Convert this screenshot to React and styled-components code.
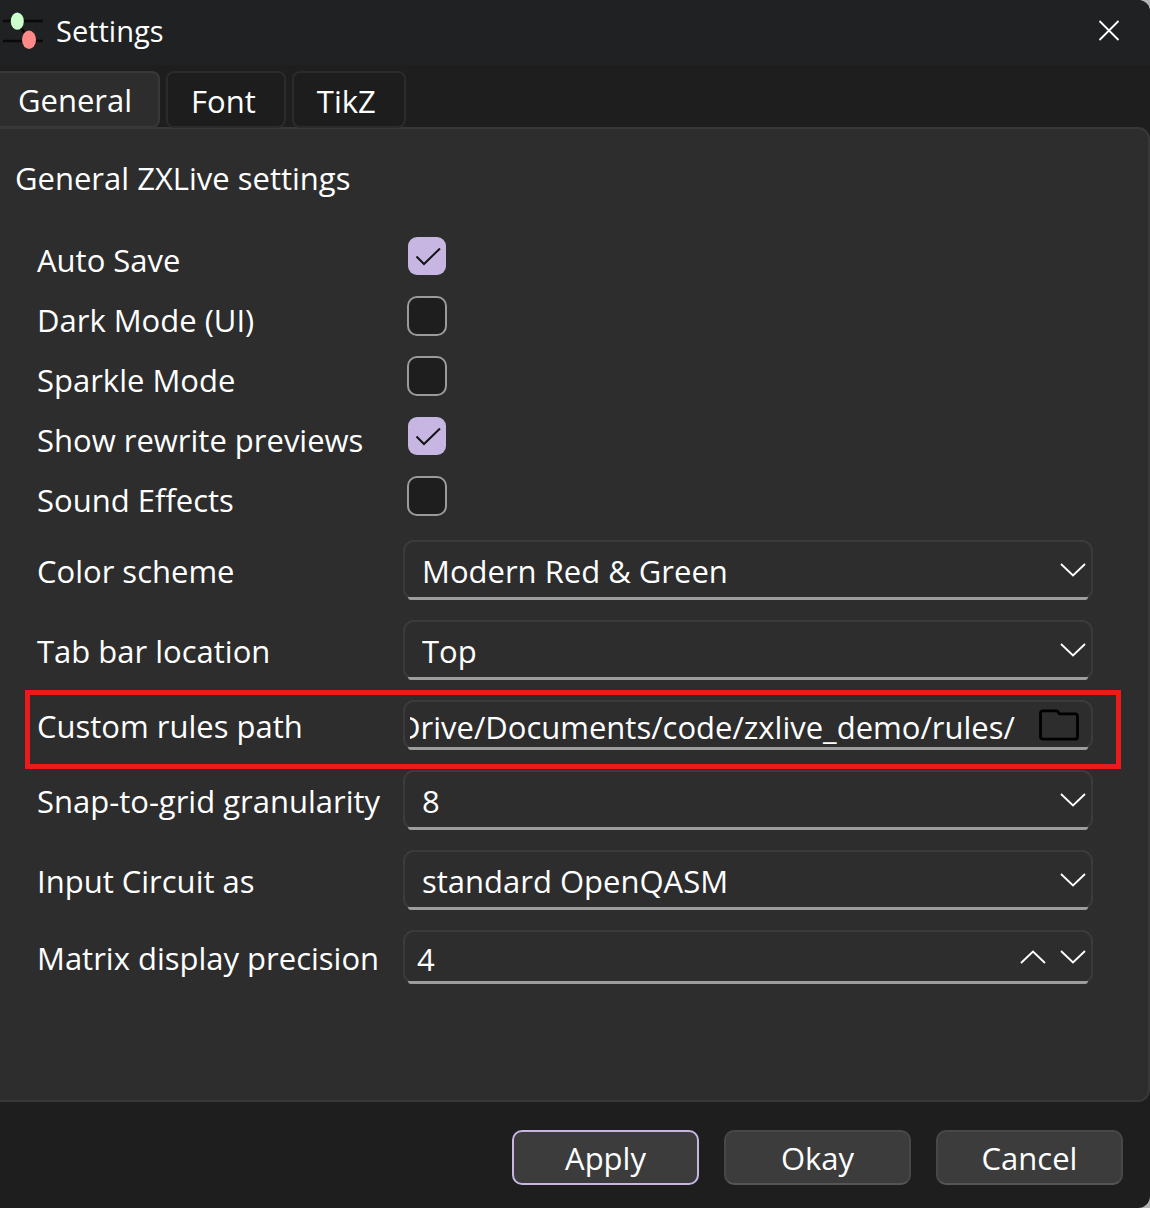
import React, { useLayoutEffect, useRef, useState } from "react";
import styled, { createGlobalStyle, css } from "styled-components";

const color = {
  desktop: "#b4b4b4",
  titleBar: "#202122",
  base: "#1e1e1e",
  panel: "#2d2d2d",
  line: "#383838",
  fieldLine: "#3b3b3b",
  underline: "#9c9c9c",
  accent: "#c8b6e2",
  text: "#ffffff",
  highlight: "#e81c1c",
};

const GlobalStyle = createGlobalStyle`
  *, *::before, *::after { box-sizing: border-box; }
  body {
    margin: 0;
    background: ${color.desktop};
    color: ${color.text};
    font-family: "Open Sans", "Noto Sans", sans-serif;
    font-size: 31px;
    line-height: 44px;
  }
  button, input, select {
    margin: 0;
    color: inherit;
    font: inherit;
  }
`;

const Window = styled.main`
  display: flex;
  flex-direction: column;
  min-height: 100vh;
  background: ${color.base};
  border-radius: 0 12px 12px 0;
  overflow: hidden;
`;

const TitleBar = styled.header`
  display: flex;
  align-items: center;
  gap: 12px;
  height: 65px;
  padding: 0 29px 4px 2px;
  background: ${color.titleBar};
`;

const Title = styled.h1`
  flex: 1;
  margin: 0;
  font-size: 29px;
  font-weight: 400;
  line-height: 40px;
`;

const IconButton = styled.button`
  display: grid;
  place-items: center;
  padding: 0;
  border: 0;
  background: none;
`;

const TabBar = styled.nav`
  display: flex;
  gap: 6px;
  padding-top: 6px;
`;

const Tab = styled.button`
  z-index: 1;
  height: 57px;
  margin-bottom: -1px;
  padding: 2px 28px 0 23px;
  border: 2px solid #2b2b2b;
  border-radius: 8px;
  background: #1d1d1d;
  ${(p) =>
    p.$active &&
    css`
      padding: 0 26px 0 18px;
      border-color: ${color.line};
      border-left: 0;
      border-radius: 0 8px 8px 0;
      background: ${color.panel};
    `}
`;

const Panel = styled.section`
  flex: 1;
  padding: 27px 55px 40px 0;
  border: 2px solid ${color.line};
  border-left: 0;
  border-radius: 0 12px 12px 0;
  background: ${color.panel};
`;

const Heading = styled.h2`
  margin: 0 0 30px;
  padding-left: 15px;
  font-size: inherit;
  font-weight: 400;
`;

const Group = styled.div`
  display: flex;
  flex-direction: column;
  gap: 20px;
  padding-left: 37px;
  margin-bottom: 24px;
`;

const CheckGroup = styled(Group)`
  margin-bottom: 30px;
  padding-top: 0;
`;

const Row = styled.div`
  position: relative;
  display: grid;
  grid-template-columns: 366px minmax(0, 1fr);
  align-items: center;
  ${(p) =>
    p.$highlighted &&
    css`
      &::after {
        content: "";
        position: absolute;
        inset: -10px -28px -19px -12px;
        z-index: 1;
        border: 5px solid ${color.highlight};
        pointer-events: none;
      }
    `}
`;

const CheckRow = styled(Row)`
  height: 40px;
`;

const Label = styled.label`
  padding-top: 2px;
  white-space: nowrap;
`;

const CheckLabel = styled(Label)`
  padding-top: 8px;
`;

const CheckCell = styled.span`
  display: grid;
  justify-content: start;
  padding-left: 4px;
  & > * {
    grid-area: 1 / 1;
  }
  svg {
    pointer-events: none;
    z-index: 1;
  }
`;

const CheckInput = styled.input`
  appearance: none;
  width: 40px;
  height: 40px;
  border: 2px solid #9a9a9a;
  border-radius: 10px;
  background: ${color.base};
  &:checked {
    border: 1px solid transparent;
    background: ${color.accent} padding-box;
  }
`;

const Field = styled.div`
  position: relative;
  display: flex;
  align-items: center;
  height: ${(p) => p.$height || 60}px;
  border: 2px solid ${color.fieldLine};
  border-radius: 11px;
  &::after {
    content: "";
    position: absolute;
    left: 3px;
    right: 3px;
    bottom: -2px;
    height: 3px;
    border-radius: 0 0 6px 6px;
    background: ${color.underline};
  }
`;

const SelectCell = styled.span`
  display: grid;
  flex: 1;
  align-items: center;
  height: 100%;
  & > * {
    grid-area: 1 / 1;
  }
  svg {
    justify-self: end;
    margin-right: 5px;
    pointer-events: none;
  }
`;

const Select = styled.select`
  appearance: none;
  width: 100%;
  height: 100%;
  padding: 2px 48px 0 17px;
  border: 0;
  outline: 0;
  background: transparent;
  option {
    background: ${color.panel};
  }
`;

const TextInput = styled.input`
  flex: 1;
  min-width: 0;
  height: 46px;
  margin-left: ${(p) => p.$inset || 5}px;
  padding: 4px 0 0;
  border: 0;
  outline: 0;
  background: transparent;
  appearance: textfield;
  &::-webkit-inner-spin-button {
    appearance: none;
  }
`;

const BrowseButton = styled(IconButton)`
  margin: 0 12px 0 24px;
`;

const Steppers = styled.span`
  display: flex;
  gap: 14px;
  margin-right: 5px;
`;

const Footer = styled.footer`
  display: flex;
  justify-content: flex-end;
  gap: 25px;
  padding: 28px 27px 23px;
`;

const PushButton = styled.button`
  width: 187px;
  height: 55px;
  padding: 0;
  border: 2px solid ${(p) => (p.$primary ? color.accent : "#484848")};
  border-bottom-color: ${(p) => (p.$primary ? color.accent : "#565656")};
  border-radius: 10px;
  background: #3c3c3c;
`;

const AppIcon = () => (
  <svg width="42" height="42" viewBox="0 0 42 42" aria-hidden="true">
    <path d="M1 11H41M1 31H41M15 12L27 30" stroke="#0a0a0a" strokeWidth="2.5" fill="none" />
    <ellipse cx="15.3" cy="11.2" rx="6.5" ry="8.6" fill="#ccffcc" />
    <ellipse cx="27" cy="29.7" rx="7" ry="9.2" fill="#ff8888" />
  </svg>
);

const CloseIcon = () => (
  <svg width="24" height="24" viewBox="0 0 24 24" aria-hidden="true">
    <path d="M2.5 2L21.5 21M21.5 2L2.5 21" stroke="#fff" strokeWidth="1.8" fill="none" />
  </svg>
);

const Chevron = ({ up }) => (
  <svg width="26" height="14" viewBox="0 0 26 14" aria-hidden="true">
    <path
      d={up ? "M1 13L13 1.5L25 13" : "M1 1L13 12.5L25 1"}
      stroke="#fff"
      strokeWidth="1.9"
      fill="none"
    />
  </svg>
);

const CheckMark = () => (
  <svg width="40" height="40" viewBox="0 0 40 40" aria-hidden="true">
    <path d="M9.5 20.5L17 28L33 12.5" stroke="#141414" strokeWidth="2" fill="none" />
  </svg>
);

const FolderIcon = () => (
  <svg width="40" height="32" viewBox="0 0 40 32" aria-hidden="true">
    <path
      d="M4 1.8H17.5Q18.6 1.8 19.2 3L20.2 4.8H36Q38.5 4.8 38.5 7.3V27.7Q38.5 30.2 36 30.2H4Q1.5 30.2 1.5 27.7V4.3Q1.5 1.8 4 1.8Z"
      stroke="#000"
      strokeWidth="2.8"
      strokeLinejoin="round"
      fill="none"
    />
  </svg>
);

const CHECKS = [
  { id: "auto-save", label: "Auto Save", on: true },
  { id: "dark-mode", label: "Dark Mode (UI)", on: false },
  { id: "sparkle-mode", label: "Sparkle Mode", on: false },
  { id: "previews", label: "Show rewrite previews", on: true },
  { id: "sound", label: "Sound Effects", on: false },
];

function CheckSetting({ id, label, on }) {
  const [checked, setChecked] = useState(on);
  return (
    <CheckRow>
      <CheckLabel htmlFor={id}>{label}</CheckLabel>
      <CheckCell>
        <CheckInput
          id={id}
          type="checkbox"
          checked={checked}
          onChange={(e) => setChecked(e.target.checked)}
        />
        {checked && <CheckMark />}
      </CheckCell>
    </CheckRow>
  );
}

function SelectSetting({ id, label, value }) {
  return (
    <Row>
      <Label htmlFor={id}>{label}</Label>
      <Field>
        <SelectCell>
          <Select id={id} defaultValue={value}>
            <option>{value}</option>
          </Select>
          <Chevron />
        </SelectCell>
      </Field>
    </Row>
  );
}

function PathSetting({ id, label, value }) {
  const input = useRef(null);
  // Long paths show their last folders, so keep the box scrolled to its end.
  useLayoutEffect(() => {
    input.current.scrollLeft = input.current.scrollWidth;
  }, []);
  return (
    <Row $highlighted>
      <Label htmlFor={id}>{label}</Label>
      <Field $height={50}>
        <TextInput id={id} ref={input} type="text" defaultValue={value} />
        <BrowseButton type="button" aria-label="Browse">
          <FolderIcon />
        </BrowseButton>
      </Field>
    </Row>
  );
}

function NumberSetting({ id, label, value }) {
  const [n, setN] = useState(value);
  return (
    <Row>
      <Label htmlFor={id}>{label}</Label>
      <Field $height={54}>
        <TextInput
          id={id}
          type="number"
          $inset={12}
          value={n}
          onChange={(e) => setN(Number(e.target.value))}
        />
        <Steppers>
          <IconButton type="button" aria-label="Increase" onClick={() => setN(n + 1)}>
            <Chevron up />
          </IconButton>
          <IconButton type="button" aria-label="Decrease" onClick={() => setN(n - 1)}>
            <Chevron />
          </IconButton>
        </Steppers>
      </Field>
    </Row>
  );
}

export default function App() {
  return (
    <>
      <GlobalStyle />
      <Window>
        <TitleBar>
          <AppIcon />
          <Title>Settings</Title>
          <IconButton type="button" aria-label="Close">
            <CloseIcon />
          </IconButton>
        </TitleBar>
        <TabBar>
          <Tab type="button" $active>General</Tab>
          <Tab type="button">Font</Tab>
          <Tab type="button">TikZ</Tab>
        </TabBar>
        <Panel>
          <Heading>General ZXLive settings</Heading>
          <CheckGroup>
            {CHECKS.map((c) => (
              <CheckSetting key={c.id} {...c} />
            ))}
          </CheckGroup>
          <Group>
            <SelectSetting id="scheme" label="Color scheme" value="Modern Red & Green" />
            <SelectSetting id="tab-bar" label="Tab bar location" value="Top" />
            <PathSetting
              id="rules"
              label="Custom rules path"
              value="Drive/Documents/code/zxlive_demo/rules/"
            />
            <SelectSetting id="snap" label="Snap-to-grid granularity" value="8" />
            <SelectSetting id="circuit" label="Input Circuit as" value="standard OpenQASM" />
            <NumberSetting id="precision" label="Matrix display precision" value={4} />
          </Group>
        </Panel>
        <Footer>
          <PushButton type="button" $primary>Apply</PushButton>
          <PushButton type="button">Okay</PushButton>
          <PushButton type="button">Cancel</PushButton>
        </Footer>
      </Window>
    </>
  );
}
